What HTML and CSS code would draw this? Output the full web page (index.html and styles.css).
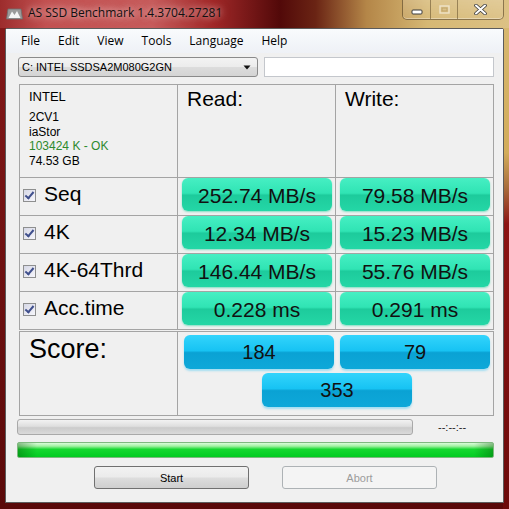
FILE: index.html
```html
<!DOCTYPE html>
<html lang="en">
<head>
    <meta charset="UTF-8">
    <title>AS SSD Benchmark 1.4.3704.27281</title>
    <link rel="stylesheet" href="styles.css">
</head>
<body>
    <div class="window">
        <div class="titlebar">
            <svg class="app-icon" width="17" height="12" viewBox="0 0 17 12">
                <path d="M2 1 L15 1 L16.5 11 L0.5 11 Z" fill="#9a9a9a" stroke="#6e6e6e" stroke-width="0.8"/>
                <path d="M2.5 10 L6 3.5 L8.5 7 L11 3 L14.5 10 Z" fill="#f4f4f4"/>
            </svg>
            <span class="title">AS SSD Benchmark 1.4.3704.27281</span>
            <div class="caption">
                <div class="cap-btn cap-min">
                    <svg width="12" height="6" viewBox="0 0 12 6"><rect x="1" y="1" width="10" height="4" rx="1" fill="#fff" stroke="#3a3a3a" stroke-width="1"/></svg>
                </div>
                <div class="cap-btn cap-max">
                    <svg width="11" height="9" viewBox="0 0 11 9"><rect x="1" y="1" width="9" height="7" fill="none" stroke="rgba(255,255,255,0.55)" stroke-width="1.4"/><rect x="3" y="3" width="5" height="3" fill="none" stroke="rgba(140,110,60,0.35)" stroke-width="1"/></svg>
                </div>
                <div class="cap-btn cap-close">
                    <svg width="13" height="11" viewBox="0 0 13 11"><path d="M2 1.5 L11 9.5 M11 1.5 L2 9.5" stroke="#3a3a3a" stroke-width="3.6" stroke-linecap="round"/><path d="M2 1.5 L11 9.5 M11 1.5 L2 9.5" stroke="#fff" stroke-width="2" stroke-linecap="round"/></svg>
                </div>
            </div>
        </div>

        <div class="client">
            <ul class="menubar">
                <li>File</li>
                <li>Edit</li>
                <li>View</li>
                <li>Tools</li>
                <li>Language</li>
                <li>Help</li>
            </ul>

            <div class="drive-row">
                <div class="combo">
                    <span>C: INTEL SSDSA2M080G2GN</span>
                    <svg width="8" height="5" viewBox="0 0 8 5"><path d="M0.5 0.5 L7.5 0.5 L4 4.5 Z" fill="#111"/></svg>
                </div>
                <div class="textbox"></div>
            </div>

            <div class="bench">
                <div class="cell info">
                    <div class="vendor">INTEL</div>
                    <div class="drive-info">
                        <div>2CV1</div>
                        <div>iaStor</div>
                        <div class="ok">103424 K - OK</div>
                        <div>74.53 GB</div>
                    </div>
                </div>
                <div class="cell head">Read:</div>
                <div class="cell head">Write:</div>

                <div class="cell label"><span class="check"></span>Seq</div>
                <div class="cell value"><div class="result">252.74 MB/s</div></div>
                <div class="cell value"><div class="result">79.58 MB/s</div></div>

                <div class="cell label"><span class="check"></span>4K</div>
                <div class="cell value"><div class="result">12.34 MB/s</div></div>
                <div class="cell value"><div class="result">15.23 MB/s</div></div>

                <div class="cell label"><span class="check"></span>4K-64Thrd</div>
                <div class="cell value"><div class="result">146.44 MB/s</div></div>
                <div class="cell value"><div class="result">55.76 MB/s</div></div>

                <div class="cell label"><span class="check"></span>Acc.time</div>
                <div class="cell value"><div class="result">0.228 ms</div></div>
                <div class="cell value"><div class="result">0.291 ms</div></div>
            </div>

            <div class="score">
                <div class="cell score-label">Score:</div>
                <div class="cell score-values">
                    <div class="total">184</div>
                    <div class="total">79</div>
                    <div class="total">353</div>
                </div>
            </div>

            <div class="progress-row">
                <div class="progress"></div>
                <span class="time">--:--:--</span>
            </div>
            <div class="done-bar"></div>

            <div class="actions">
                <button class="btn">Start</button>
                <button class="btn" disabled>Abort</button>
            </div>
        </div>
    </div>
</body>
</html>
```

FILE: styles.css
```css
body {
    margin: 0;
    padding: 0;
    font-family: "Liberation Sans", Arial, sans-serif;
    color: #000;
}
.window {
    width: 509px;
    height: 509px;
    overflow: hidden;
    display: flex;
    flex-direction: column;
    background:
        linear-gradient(90deg, #9c2c2c 0%, #c25252 9%, #c65c5c 30%, #a02828 42%, #520909 55%, #6a2414 62%, #b48648 72%, #d6b874 84%, #dcc184 100%) 0 0 / 100% 28px no-repeat,
        linear-gradient(#d8ba74 0%, #d2ac5a 30%, #a86c3c 37%, #8c1414 44%, #6c0a0a 100%) right top / 6px 100% no-repeat,
        linear-gradient(#861a1a, #5a0909);
}
.titlebar {
    height: 28px;
    display: flex;
    align-items: flex-start;
    flex-shrink: 0;
}
.app-icon {
    margin: 8px 0 0 6px;
}
.title {
    margin: 5px 0 0 5px;
    font-family: "Open Sans", "Noto Sans", sans-serif;
    font-size: 12px;
    line-height: 16px;
    color: #111;
    text-shadow: 0 0 6px rgba(255, 230, 230, 0.8), 0 0 10px rgba(255, 230, 230, 0.5);
}
.caption {
    margin-left: auto;
    margin-right: 5px;
    display: flex;
    height: 19px;
    border: 1px solid rgba(70, 50, 20, 0.55);
    border-top: none;
    border-radius: 0 0 5px 5px;
    background: linear-gradient(rgba(255, 255, 255, 0.18), rgba(255, 255, 255, 0.05));
    box-shadow: inset 0 -1px 0 rgba(255, 255, 255, 0.35);
}
.cap-btn {
    display: flex;
    align-items: center;
    justify-content: center;
    border-right: 1px solid rgba(70, 50, 20, 0.45);
}
.cap-btn:last-child {
    border-right: none;
}
.cap-min {
    width: 27px;
}
.cap-min svg {
    margin-top: 5px;
}
.cap-max {
    width: 26px;
}
.cap-close {
    width: 45px;
}
.client {
    flex: 1;
    margin: 0 5px 6px 5px;
    border: 1px solid #5c5c5c;
    border-radius: 2px 2px 0 0;
    background: #f0f0f0;
}
.menubar {
    list-style: none;
    margin: 0;
    padding: 0 0 0 6px;
    height: 24px;
    display: flex;
    font-family: "Open Sans", "Noto Sans", sans-serif;
    font-size: 12px;
    line-height: 24px;
    background: linear-gradient(#f9fbfd, #eef1f6);
}
.menubar li {
    padding: 0 9px;
}
.drive-row {
    display: flex;
    margin: 4px 0 0 12px;
    gap: 6px;
}
.combo {
    width: 240px;
    height: 20px;
    box-sizing: border-box;
    border: 1px solid #8a8a8a;
    border-radius: 3px;
    background: linear-gradient(#f3f3f3, #ececec 48%, #dcdcdc 52%, #d4d4d4);
    display: flex;
    align-items: center;
    justify-content: space-between;
    padding: 0 6px 0 3px;
    font-size: 11px;
}
.textbox {
    width: 230px;
    height: 20px;
    box-sizing: border-box;
    border: 1px solid #c4c7cc;
    background: #fff;
}
.bench {
    margin: 7px 0 0 13px;
    width: 475px;
    box-sizing: border-box;
    display: grid;
    grid-template-columns: repeat(3, 157px);
    grid-template-rows: 92px repeat(4, 37px);
    gap: 1px;
    padding: 1px;
    background: #a4a4a4;
}
.cell {
    background: #f0f0f0;
}
.info {
    padding: 4px 0 0 9px;
}
.vendor {
    font-size: 13px;
    line-height: 16px;
}
.drive-info {
    margin-top: 5px;
    font-size: 12px;
    line-height: 14.6px;
}
.ok {
    color: #2d8a2d;
}
.head {
    padding: 2px 0 0 9px;
    font-size: 21px;
}
.label {
    display: flex;
    align-items: center;
    padding: 0 0 5px 3px;
    font-size: 21px;
}
.check {
    width: 13px;
    height: 13px;
    box-sizing: border-box;
    margin: 2px 8px 0 0;
    border: 1px solid #8e8f8f;
    background: linear-gradient(135deg, #d6d8e6, #f6f6fb);
    position: relative;
}
.check::after {
    content: "";
    position: absolute;
    left: 3px;
    top: 0px;
    width: 3px;
    height: 7px;
    border: solid #3f4f8c;
    border-width: 0 2px 2px 0;
    transform: rotate(40deg);
}
.value {
    padding: 0 3px 0 4px;
}
.result {
    height: 33px;
    box-sizing: border-box;
    padding-top: 3px;
    line-height: 30px;
    text-align: center;
    font-size: 21px;
    color: #111;
    border-radius: 6px;
    background: linear-gradient(#46efc3 0%, #30e4b4 46%, #1dcb9c 52%, #24d7a6 100%);
    box-shadow: 0 1px 2px rgba(40, 210, 160, 0.55);
}
.score {
    margin: 1px 0 0 13px;
    width: 475px;
    height: 85px;
    box-sizing: border-box;
    display: grid;
    grid-template-columns: 157px 1fr;
    gap: 1px;
    padding: 1px;
    background: #a4a4a4;
}
.score-label {
    padding: 2px 0 0 9px;
    font-size: 27px;
}
.score-values {
    display: flex;
    flex-wrap: wrap;
    justify-content: center;
    align-content: flex-start;
    gap: 4px 6px;
    padding: 3px 3px 0 6px;
}
.total {
    width: 150px;
    height: 34px;
    line-height: 34px;
    text-align: center;
    font-size: 20px;
    color: #111;
    border-radius: 6px;
    background: linear-gradient(#33d4fc 0%, #17c3f3 46%, #0aa2d4 52%, #0ea8d9 100%);
    box-shadow: 0 2px 2px rgba(90, 205, 245, 0.5);
}
.progress-row {
    display: flex;
    align-items: center;
    margin: 3px 0 0 11px;
}
.progress {
    width: 396px;
    height: 16px;
    box-sizing: border-box;
    border: 1px solid #a9a9a9;
    border-radius: 3px;
    background: linear-gradient(#f2f2f2, #dedede 45%, #cbcbcb 55%, #dadada);
}
.time {
    margin-left: 25px;
    font-size: 11px;
    color: #222;
}
.done-bar {
    margin: 7px 9px 0 11px;
    height: 16px;
    box-sizing: border-box;
    border: 1px solid #7fb87f;
    border-radius: 2px;
    background:
        linear-gradient(90deg, rgba(0, 70, 0, 0.35), rgba(0, 70, 0, 0) 4%, rgba(0, 70, 0, 0) 96%, rgba(0, 70, 0, 0.35)),
        linear-gradient(#dafcda 0%, #a4f2a4 22%, #16d830 45%, #02cc22 100%);
}
.actions {
    display: flex;
    margin: 8px 0 0 88px;
    gap: 33px;
}
.btn {
    width: 155px;
    height: 23px;
    padding: 0;
    font-family: "Liberation Sans", Arial, sans-serif;
    font-size: 11px;
    color: #000;
    border: 1px solid #707070;
    border-radius: 3px;
    background: linear-gradient(#f2f2f2, #ebebeb 48%, #dddddd 52%, #cfcfcf);
}
.btn:disabled {
    color: #9c9c9c;
    border-color: #adb2b5;
    background: #f4f4f4;
}
```
